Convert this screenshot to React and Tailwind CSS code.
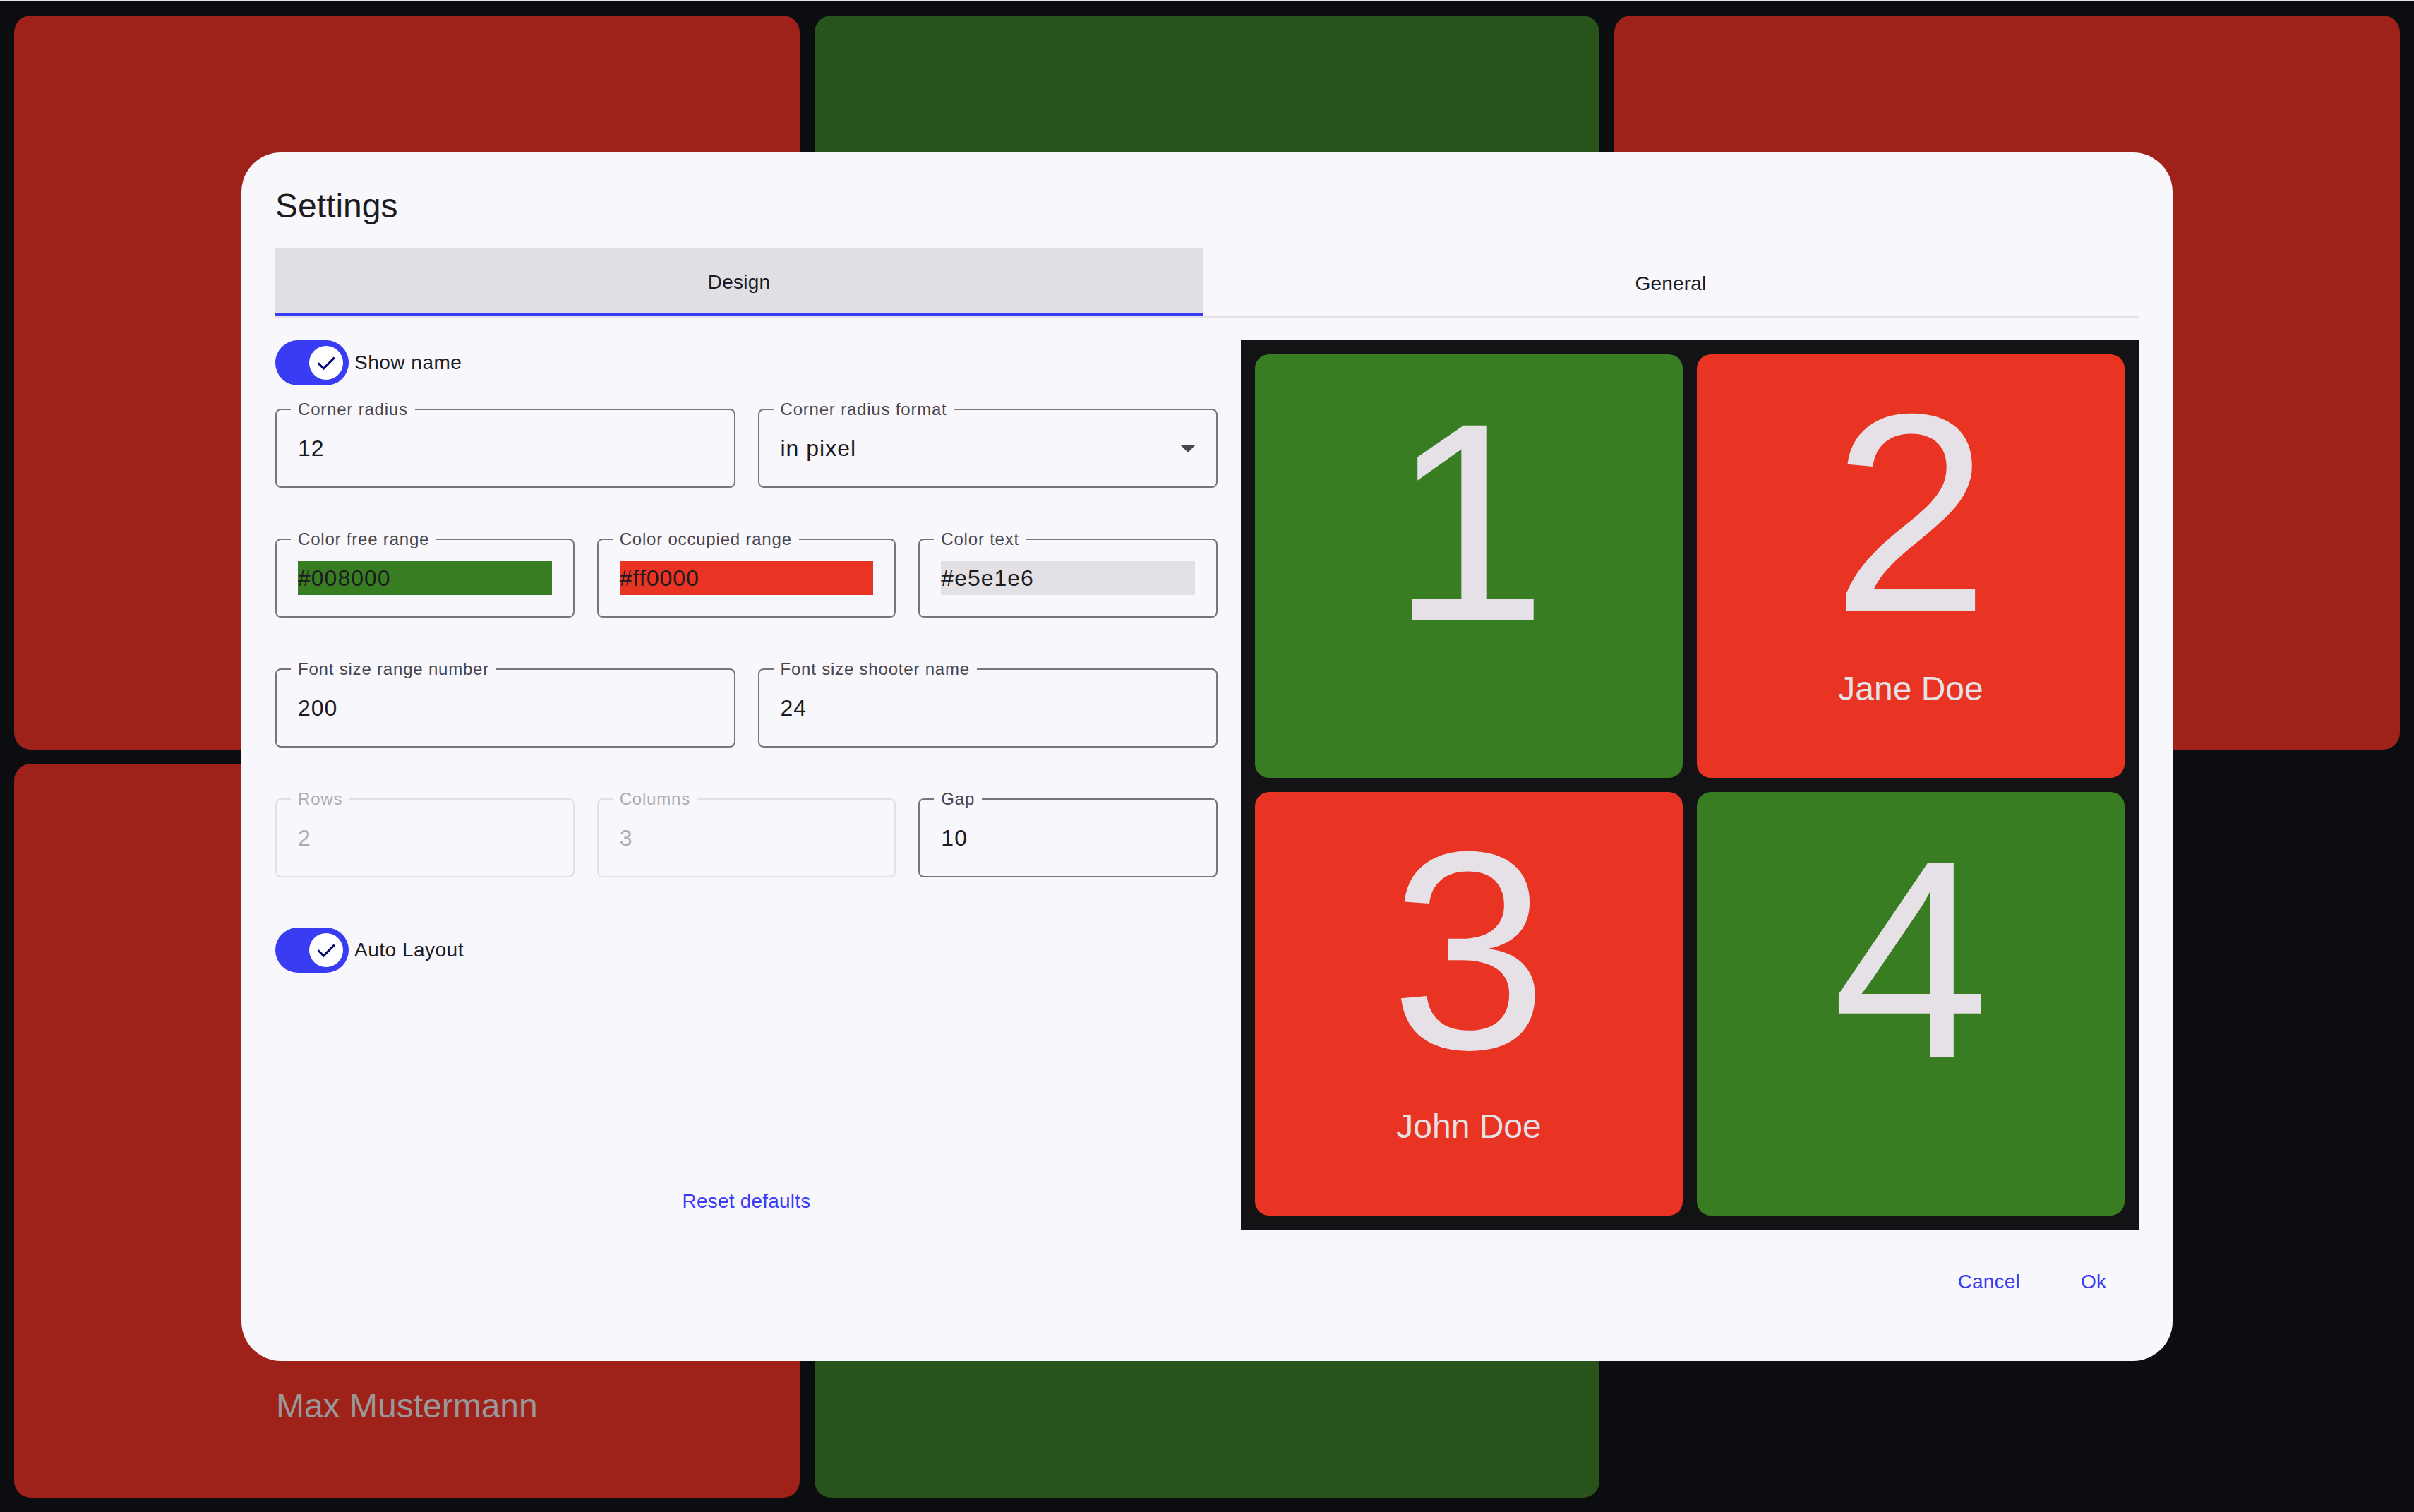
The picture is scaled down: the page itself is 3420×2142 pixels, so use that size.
import React from "react";

function Check() {
  return (
    <svg width="32" height="32" viewBox="0 0 24 24" fill="none">
      <path d="M3.5 12.2 L9.3 18 L20.8 6.5" stroke="#0a0a6e" strokeWidth="2.3" strokeLinecap="butt" strokeLinejoin="miter" />
    </svg>
  );
}

function Switch({ label }) {
  return (
    <div className="flex items-center h-[64px]">
      <div className="w-[104px] h-[64px] rounded-full bg-[#3a3cf4] flex items-center justify-end pr-[8px]">
        <div className="w-[48px] h-[48px] rounded-full bg-white flex items-center justify-center">
          <Check />
        </div>
      </div>
      <span className="ml-[8px] text-[28px] leading-none tracking-[0.5px] text-[#1c1b1f]">{label}</span>
    </div>
  );
}

function Field({ label, disabled, children, className = "" }) {
  return (
    <div
      className={`relative h-[112px] rounded-[8px] border-2 flex items-center px-[30px] ${
        disabled ? "border-[#e2e0e5]" : "border-[#79747e]"
      } ${className}`}
    >
      <span
        className={`absolute left-[20px] top-[-13px] px-[10px] bg-[#f8f7fc] text-[24px] leading-[24px] tracking-[0.8px] whitespace-nowrap ${
          disabled ? "text-[#aeabb1]" : "text-[#49454f]"
        }`}
      >
        {label}
      </span>
      {children}
    </div>
  );
}

function Value({ children, disabled }) {
  return (
    <span className={`text-[32px] leading-none tracking-[1px] ${disabled ? "text-[#aeabb1]" : "text-[#1c1b1f]"}`}>
      {children}
    </span>
  );
}

function ColorValue({ bg, children }) {
  return (
    <div className={`flex-1 h-[48px] flex items-center text-[32px] leading-none tracking-[1px] text-[#1c1b1f] ${bg}`}>
      {children}
    </div>
  );
}

function Tile({ n, name, color }) {
  return (
    <div className={`rounded-[20px] flex flex-col items-center text-[#e5e1e6] ${color} ${name ? "pt-[25px]" : "pt-[38px]"}`}>
      <div className="text-[400px] leading-none">{n}</div>
      {name && <div className="mt-[25px] text-[48px] leading-none">{name}</div>}
    </div>
  );
}

export default function App() {
  return (
    <div className="relative w-[3420px] h-[2142px] overflow-hidden bg-[#0c0d10] font-['Liberation_Sans',Arial,sans-serif]">
      <div className="h-[2px] bg-[#e2e2e2]" />
      <div className="grid grid-cols-3 grid-rows-[1040px_1040px] gap-x-[21px] gap-y-[20px] px-[20px] pt-[20px]">
        <div className="rounded-[24px] bg-[#9e2219]" />
        <div className="rounded-[24px] bg-[#28531a]" />
        <div className="rounded-[24px] bg-[#9e2219]" />
        <div className="rounded-[24px] bg-[#9e2219] flex flex-col items-center pt-[886px]">
          <div className="text-[48px] leading-none text-[#9a9899]">Max Mustermann</div>
        </div>
        <div className="rounded-[24px] bg-[#28531a]" />
        <div />
      </div>

      <div className="absolute inset-0 flex items-center justify-center">
        <div className="w-[2736px] h-[1712px] rounded-[56px] bg-[#f8f7fc] px-[48px] pt-[48px] flex flex-col translate-y-[1px]">
          <div className="text-[48px] leading-[56px] text-[#1c1b1f]">Settings</div>

          <div className="mt-[32px] flex h-[96px]">
            <div className="w-[1314px] bg-[#e0dfe4] border-b-4 border-[#3a3cf4] flex items-center justify-center pt-[4px] text-[28px] tracking-[0.2px] text-[#1c1b1f]">
              Design
            </div>
            <div className="flex-1 flex items-center justify-center pt-[4px] text-[28px] tracking-[0.2px] text-[#1c1b1f]">
              General
            </div>
          </div>
          <div className="h-[2px] bg-[#e4e2e8]" />

          <div className="mt-[32px] flex gap-[33px]">
            <div className="w-[1335px] flex flex-col">
              <Switch label="Show name" />

              <div className="mt-[33px] grid grid-cols-2 gap-x-[32px]">
                <Field label="Corner radius">
                  <Value>12</Value>
                </Field>
                <Field label="Corner radius format" className="justify-between pr-[16px]">
                  <Value>in pixel</Value>
                  <svg width="48" height="48" viewBox="0 0 24 24">
                    <path d="M7 10l5 5 5-5z" fill="#49454f" />
                  </svg>
                </Field>
              </div>

              <div className="mt-[72px] grid grid-cols-3 gap-x-[32px]">
                <Field label="Color free range">
                  <ColorValue bg="bg-[#387d22]">#008000</ColorValue>
                </Field>
                <Field label="Color occupied range">
                  <ColorValue bg="bg-[#e93323]">#ff0000</ColorValue>
                </Field>
                <Field label="Color text">
                  <ColorValue bg="bg-[#e3e1e6]">#e5e1e6</ColorValue>
                </Field>
              </div>

              <div className="mt-[72px] grid grid-cols-2 gap-x-[32px]">
                <Field label="Font size range number">
                  <Value>200</Value>
                </Field>
                <Field label="Font size shooter name">
                  <Value>24</Value>
                </Field>
              </div>

              <div className="mt-[72px] grid grid-cols-3 gap-x-[32px]">
                <Field label="Rows" disabled>
                  <Value disabled>2</Value>
                </Field>
                <Field label="Columns" disabled>
                  <Value disabled>3</Value>
                </Field>
                <Field label="Gap">
                  <Value>10</Value>
                </Field>
              </div>

              <div className="mt-[71px]">
                <Switch label="Auto Layout" />
              </div>

              <div className="mt-auto flex justify-center">
                <button className="h-[80px] px-[24px] text-[28px] tracking-[0.2px] text-[#3a3cf4]">Reset defaults</button>
              </div>
            </div>

            <div className="flex-1 h-[1260px] bg-[#131315] p-[20px] grid grid-cols-2 grid-rows-2 gap-[20px]">
              <Tile n="1" color="bg-[#387d22]" />
              <Tile n="2" name="Jane Doe" color="bg-[#e93323]" />
              <Tile n="3" name="John Doe" color="bg-[#e93323]" />
              <Tile n="4" color="bg-[#387d22]" />
            </div>
          </div>

          <div className="mt-[34px] flex justify-end gap-[16px]">
            <button className="h-[80px] min-w-[128px] px-[24px] text-[28px] tracking-[0.2px] text-[#3a3cf4]">Cancel</button>
            <button className="h-[80px] min-w-[128px] px-[24px] text-[28px] tracking-[0.2px] text-[#3a3cf4]">Ok</button>
          </div>
        </div>
      </div>
    </div>
  );
}
